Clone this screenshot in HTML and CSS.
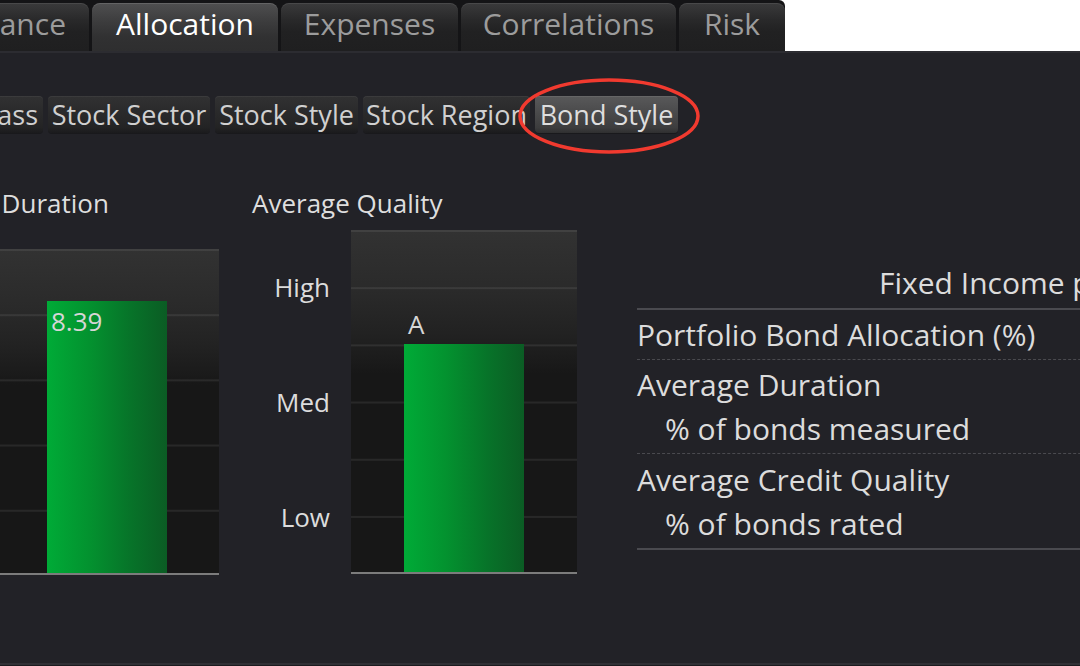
FILE: index.html
```html
<!DOCTYPE html>
<html lang="en">
<head>
<meta charset="utf-8">
<title>Allocation - Bond Style</title>
<link rel="stylesheet" href="styles.css">
</head>
<body>
<header class="topbar">
  <nav class="tabs">
    <div class="tab tab-clip"><span>Performance</span></div>
    <div class="tab tab-active tab-alloc">Allocation</div>
    <div class="tab tab-exp">Expenses</div>
    <div class="tab tab-corr">Correlations</div>
    <div class="tab tab-risk">Risk</div>
  </nav>
</header>
<main class="panel">
  <div class="subtabs">
    <div class="subtab sub-clip"><span>Asset Class</span></div>
    <div class="subtab sub-sector">Stock Sector</div>
    <div class="subtab sub-style">Stock Style</div>
    <div class="subtab sub-region">Stock Region</div>
    <div class="subtab sub-active sub-bond">Bond Style</div>
  </div>

  <div class="content">
    <section class="chart chart-duration">
      <h2 class="chart-title">Average Duration</h2>
      <div class="chart-body">
        <div class="ylabels"></div>
        <div class="plot plot-duration">
          <div class="barcol">
            <div class="bar" style="height:272px"><span class="val val-in">8.39</span></div>
          </div>
        </div>
      </div>
    </section>

    <section class="chart chart-quality">
      <h2 class="chart-title">Average Quality</h2>
      <div class="chart-body">
        <div class="ylabels">
          <div class="ylabel">High</div>
          <div class="ylabel">Med</div>
          <div class="ylabel">Low</div>
        </div>
        <div class="plot plot-quality">
          <div class="barcol">
            <span class="val val-out">A</span>
            <div class="bar" style="height:228px"></div>
          </div>
        </div>
      </div>
    </section>

    <section class="fi-table">
      <div class="fi-head">Fixed Income portfolio</div>
      <div class="fi-row fi-row1">
        <div class="fi-line">Portfolio Bond Allocation (%)</div>
      </div>
      <div class="fi-row fi-row2">
        <div class="fi-line">Average Duration</div>
        <div class="fi-line fi-sub">% of bonds measured</div>
      </div>
      <div class="fi-row fi-row3">
        <div class="fi-line">Average Credit Quality</div>
        <div class="fi-line fi-sub">% of bonds rated</div>
      </div>
    </section>
  </div>
</main>

<svg class="highlight" width="200" height="90" viewBox="0 0 200 90" aria-hidden="true">
  <ellipse cx="100" cy="45" rx="89" ry="36" fill="none" stroke="#f13a2f" stroke-width="3.5"/>
</svg>
</body>
</html>
```

FILE: styles.css
```css
* { box-sizing: border-box; }

html, body {
  margin: 0;
  padding: 0;
}

body {
  position: relative;
  width: 1080px;
  height: 666px;
  overflow: hidden;
  background: #1b1b1f;
  font-family: "Open Sans", "Noto Sans", sans-serif;
  color: #dcdcdc;
}

/* ---------- top tabs ---------- */
.topbar {
  display: flex;
  height: 51px;
  background: #ffffff;
}

.tabs {
  display: flex;
  gap: 3px;
  width: 785px;
  height: 51px;
  padding-top: 3px;
  background: #141416;
  border-top-right-radius: 6px;
  overflow: hidden;
}

.tab {
  display: flex;
  justify-content: center;
  height: 48px;
  padding-top: 1px;
  font-size: 30px;
  line-height: 40px;
  color: #9c9c9c;
  white-space: nowrap;
  border-radius: 8px 8px 0 0;
  background: linear-gradient(#3a3a3b 0%, #29292a 35%, #212122 60%, #1f1f20 100%);
  box-shadow: inset 0 1px 0 rgba(255,255,255,0.08);
}

.tab-clip {
  width: 89px;
  justify-content: flex-end;
  padding-right: 23px;
  border-top-left-radius: 0;
  overflow: hidden;
}

.tab-alloc { width: 186px; }
.tab-exp { width: 177px; }
.tab-corr { width: 215px; }
.tab-risk { width: 106px; }

.tab-active {
  color: #ffffff;
  background: linear-gradient(#4f4f50 0%, #3c3c3d 40%, #313132 70%, #2e2e2f 100%);
  box-shadow: inset 0 1px 0 rgba(255,255,255,0.12);
}

/* ---------- panel ---------- */
.panel {
  height: 614px;
  background: #222227;
  border-top: 2px solid #2c2c31;
  border-bottom: 2px solid #303035;
}

.subtabs {
  display: flex;
  gap: 5px;
  margin-top: 43px;
  height: 37px;
}

.subtab {
  display: flex;
  justify-content: center;
  height: 37px;
  padding-top: 2px;
  padding-bottom: 2px;
  font-size: 27px;
  line-height: 33px;
  color: #d0d0d0;
  white-space: nowrap;
  border-radius: 4px;
  background: linear-gradient(#313132 0%, #29292a 50%, #232324 85%, #1b1b1d 100%);
  box-shadow: inset 0 1px 0 rgba(255,255,255,0.05), 0 1px 0 #19191c;
}

.sub-clip {
  width: 43px;
  justify-content: flex-end;
  padding-right: 5px;
  border-top-left-radius: 0;
  border-bottom-left-radius: 0;
  overflow: hidden;
}

.sub-sector { width: 162px; }
.sub-style { width: 143px; }
.sub-region { width: 167px; }
.sub-bond { width: 143px; }

.sub-active {
  color: #dedede;
  background: linear-gradient(#59595a 0%, #4a4a4b 45%, #3d3d3e 85%, #2f2f30 100%);
  box-shadow: inset 0 1px 0 rgba(255,255,255,0.08), 0 1px 0 #19191c;
}

/* ---------- content ---------- */
.content {
  display: flex;
  align-items: flex-start;
  margin-top: 55px;
}

.chart {
  display: flex;
  flex-direction: column;
  width: 325px;
  flex: none;
}

.chart-duration { margin-left: -106px; }
.chart-quality { margin-left: 33px; }

.chart-title {
  margin: 0;
  font-size: 26px;
  font-weight: normal;
  line-height: 30px;
  color: #dedede;
  white-space: nowrap;
}

.chart-duration .chart-title { padding-left: 3px; }

.chart-body {
  display: flex;
}

.chart-duration .chart-body { margin-top: 31px; }
.chart-quality .chart-body { margin-top: 12px; }

.ylabels {
  display: flex;
  flex-direction: column;
  width: 99px;
  padding-right: 21px;
}

.ylabel {
  flex: 1;
  display: flex;
  align-items: center;
  justify-content: flex-end;
  font-size: 26px;
  line-height: 30px;
  color: #dcdcdc;
}

.plot {
  display: flex;
  align-items: flex-end;
  width: 226px;
  border-bottom: 2px solid #7c7c7c;
  background:
    linear-gradient(rgba(255,255,255,0.075) 0 2px, transparent 2px) 0 0 / 100% var(--band) repeat-y,
    linear-gradient(#323232 0%, #2a2a2a 18%, #222222 30%, #1b1b1b 38%, #171717 42%, #171717 100%);
}

.plot-duration {
  --band: 65.2px;
  height: 326px;
  padding-left: 54px;
}

.plot-quality {
  --band: 57.2px;
  height: 344px;
  padding-left: 53px;
}

.barcol {
  display: flex;
  flex-direction: column;
  justify-content: flex-end;
  align-items: flex-start;
  width: 120px;
}

.bar {
  width: 120px;
  padding-left: 4px;
  padding-top: 5px;
  background: linear-gradient(to right, #00ab37 0%, #03922f 35%, #077329 70%, #0b5c24 100%);
}

.val {
  display: block;
  font-size: 26px;
  line-height: 30px;
  color: #d6d6d6;
}

.val-out {
  margin-left: 4px;
  margin-bottom: 5px;
}

/* ---------- fixed income table ---------- */
.fi-table {
  flex: none;
  width: 760px;
  margin-left: 60px;
  margin-top: 71px;
  font-size: 30px;
  line-height: 44px;
  color: #dcdcdc;
  white-space: nowrap;
}

.fi-head {
  padding-left: 242px;
  padding-top: 2px;
  padding-bottom: 3px;
  border-bottom: 2px solid #4a4a4f;
}

.fi-row {
  padding-top: 3px;
  padding-bottom: 2px;
}

.fi-row1, .fi-row2 {
  border-bottom: 1px dashed #4a4a4f;
}

.fi-row3 {
  padding-top: 4px;
  border-bottom: 2px solid #4a4a4f;
}

.fi-sub {
  padding-left: 28px;
}

/* ---------- annotation ---------- */
.highlight {
  position: absolute;
  left: 509px;
  top: 71px;
  pointer-events: none;
}
```
